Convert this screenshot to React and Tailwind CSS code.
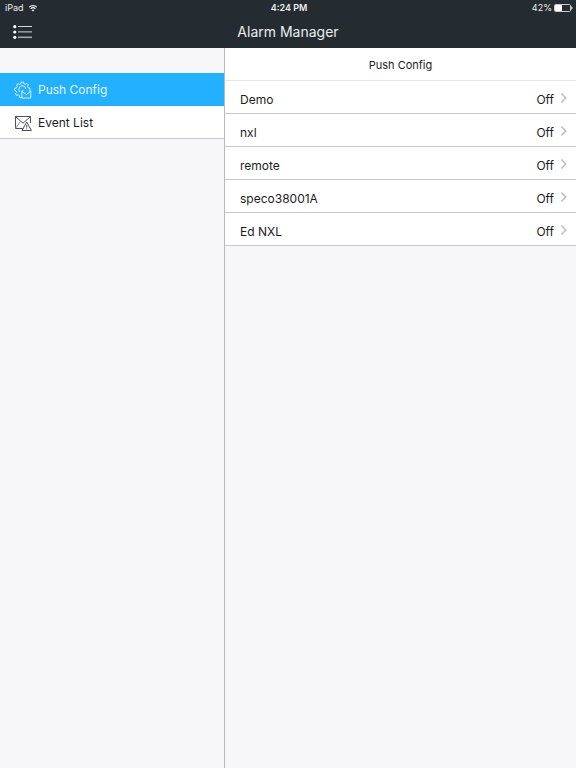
import React, { useState } from 'react';

const menuItems = [
  { id: 'push', label: 'Push Config', Icon: PushConfigIcon },
  { id: 'events', label: 'Event List', Icon: EventListIcon },
];

const devices = [
  { name: 'Demo', push: false },
  { name: 'nxl', push: false },
  { name: 'remote', push: false },
  { name: 'speco38001A', push: false },
  { name: 'Ed NXL', push: false },
];

function WifiIcon() {
  return (
    <svg className="w-2.5 h-2" viewBox="0 0 10 8" fill="none" stroke="currentColor" strokeWidth="1.3" aria-hidden="true">
      <path d="M1.2 3.1a5.4 5.4 0 0 1 7.6 0" />
      <path d="M2.6 4.8a3.4 3.4 0 0 1 4.8 0" />
      <path d="M5 7.6L3.6 6.2a2 2 0 0 1 2.8 0z" fill="currentColor" stroke="none" />
    </svg>
  );
}

function BatteryIcon() {
  return (
    <svg className="w-[19px] h-2" viewBox="0 0 19 8" aria-hidden="true">
      <rect x="0.5" y="0.5" width="16" height="7" rx="1" fill="none" stroke="#c9cccf" />
      <rect x="1" y="1" width="7" height="6" fill="#fff" />
      <path d="M17.5 2.5c1 .3 1 2.7 0 3z" fill="#e3e5e6" stroke="#e3e5e6" strokeWidth="0.5" />
    </svg>
  );
}

function MenuIcon() {
  return (
    <svg className="w-5 h-4" viewBox="0 0 20 16" aria-hidden="true">
      <g fill="#fff">
        <circle cx="1.8" cy="2.7" r="1.6" />
        <circle cx="1.8" cy="8" r="1.6" />
        <circle cx="1.8" cy="13.3" r="1.6" />
      </g>
      <g stroke="#d5d8da">
        <path d="M5 2.5h14" />
        <path d="M5 7.9h14" />
        <path d="M5 13.3h14" strokeWidth="1.6" stroke="#a3a7aa" />
      </g>
    </svg>
  );
}

function PushConfigIcon() {
  return (
    <svg className="w-[18px] h-[18px]" viewBox="0 0 18 18" fill="none" stroke="#d3f0ff" strokeWidth="1" strokeLinejoin="round" aria-hidden="true">
      <path d="M7.5 15.6L7.2 16.9L5.6 16.4L5.5 14.7L4.1 13.8L2.5 14.4L1.4 12.8L2.6 11.5L2.2 10L.6 9.2L.8 7.3L2.5 6.9L3.2 5.5L2.6 3.9L4 2.6L5.5 3.4L7 2.7L7.4 1H9.4L9.9 2.7L11.4 3.3L12.9 2.4L14.3 3.8L13.6 5.3L14.3 6.8L16 7.3L16.1 8.8" />
      <path d="M6.3 11.2A3.5 3.5 0 1 1 11.8 8" />
      <path d="M9.6 9.9H7.9V17H16.8V9.9H15" />
      <path d="M8 10.4l4.4 3.2L16.7 10.4" />
    </svg>
  );
}

function EventListIcon() {
  return (
    <svg className="w-[18px] h-[18px]" viewBox="0 0 18 18" fill="none" stroke="#505357" strokeWidth="1" strokeLinejoin="round" aria-hidden="true">
      <path d="M9.6 14.5H1.5V2.5H16.5V9" />
      <path d="M1.5 2.5L9 9.2L16.5 2.5" />
      <path d="M1.5 14.5L6.4 7.4" stroke="#8c8f92" />
      <path d="M12.7 8L17.4 16.5H8z" fill="#fff" />
      <path d="M12.7 10.8v2.8M12.7 14.4v1" />
    </svg>
  );
}

function ChevronIcon() {
  return (
    <svg className="w-2 h-3" viewBox="0 0 8 12" fill="none" stroke="#bdbdc1" strokeWidth="1.5" aria-hidden="true">
      <path d="M1.4 1.5L5.8 6L1.4 10.5" />
    </svg>
  );
}

function StatusBar() {
  return (
    <div className="grid grid-cols-3 items-center h-4 pl-[5px] pr-[3px] text-[9px] leading-4">
      <div className="flex items-center gap-1">
        <span>iPad</span>
        <WifiIcon />
      </div>
      <div className="text-center font-semibold">4:24 PM</div>
      <div className="flex items-center justify-end gap-0.5">
        <span>42%</span>
        <BatteryIcon />
      </div>
    </div>
  );
}

function Sidebar({ active, onSelect }) {
  return (
    <nav className="w-[225px] shrink-0 pt-[25px] border-r border-[#b9b9bc]">
      {menuItems.map(({ id, label, Icon }) => (
        <button
          key={id}
          type="button"
          onClick={() => onSelect(id)}
          className={`flex items-center gap-1.5 w-full h-[33px] pt-0.5 pl-3.5 border-b text-xs ${
            active === id ? 'bg-[#22b0ff] border-[#22b0ff] text-[#e2f5ff]' : 'bg-white border-[#c8c8ca] text-[#1c1c1e]'
          }`}
        >
          <Icon />
          <span>{label}</span>
        </button>
      ))}
    </nav>
  );
}

function DeviceRow({ device }) {
  return (
    <li>
      <button
        type="button"
        className="flex items-center w-full h-[33px] pt-0.5 pl-[15px] pr-2 bg-white border-b border-[#c8c8ca] text-xs text-[#1c1c1e]"
      >
        <span className="pt-1">{device.name}</span>
        <span className="ml-auto mr-1.5 pt-1">{device.push ? 'On' : 'Off'}</span>
        <ChevronIcon />
      </button>
    </li>
  );
}

export default function App() {
  const [active, setActive] = useState('push');

  return (
    <div className="flex flex-col min-h-dvh bg-[#f7f7f9] font-['Inter','Liberation_Sans',sans-serif]">
      <header className="bg-[#242c32] text-[#eceeef]">
        <StatusBar />
        <div className="grid grid-cols-[1fr_auto_1fr] items-center h-8 px-[13px]">
          <button type="button" aria-label="Menu" className="justify-self-start">
            <MenuIcon />
          </button>
          <h1 className="text-sm">Alarm Manager</h1>
        </div>
      </header>

      <div className="flex flex-1">
        <Sidebar active={active} onSelect={setActive} />
        <main className="flex-1">
          <h2 className="h-[33px] bg-white border-b border-[#e6e6e8] text-[11px] leading-[34px] text-center text-[#1c1c1e]">
            Push Config
          </h2>
          <ul>
            {devices.map((device) => (
              <DeviceRow key={device.name} device={device} />
            ))}
          </ul>
        </main>
      </div>
    </div>
  );
}
